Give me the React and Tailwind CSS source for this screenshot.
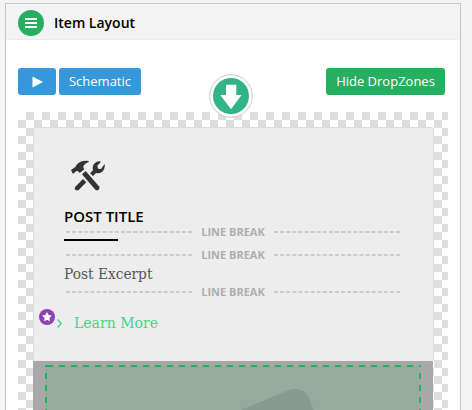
import React from 'react';

function Checker() {
  return (
    <svg className="absolute inset-0 h-full w-full" shapeRendering="crispEdges">
      <defs>
        <pattern id="checker" width="16" height="16" patternUnits="userSpaceOnUse">
          <rect width="16" height="16" fill="#fff" />
          <path d="M8 0h8v8H8zM0 8h8v8H0z" fill="#dedede" />
        </pattern>
      </defs>
      <rect width="100%" height="100%" fill="url(#checker)" />
    </svg>
  );
}

function Dashes() {
  return (
    <svg className="h-[2px] w-[126px] shrink-0">
      <line x1="0" y1="1" x2="126" y2="1" stroke="#cbcbcb" strokeWidth="2" strokeDasharray="4 2.1" />
    </svg>
  );
}

function LineBreak() {
  return (
    <div className="ml-[2px] flex h-[14px] w-[334px] items-center justify-between">
      <Dashes />
      <span className="whitespace-nowrap text-[11px] font-bold leading-[14px] text-[#aeaeae]">LINE BREAK</span>
      <Dashes />
    </div>
  );
}

function Tools() {
  return (
    <svg className="ml-[7px] mt-[32px] h-[31px] w-[34px]" viewBox="0 0 102 93" fill="#333">
      <path d="M0 30L13 21Q20 6 36 3Q46 1 54 3L52 6Q42 10 37 18Q36 23 40 28L26 39Q22 31 15 34L6 42Z" />
      <path d="M33 43L44 33L85 80Q87 85 83 89Q78 93 73 89Z" />
      <path d="M36 57L46 67L23 90Q17 93 13 89Q9 85 13 80Z" />
      <path d="M57 40L66 31Q62 14 76 6Q84 2 90 5L79 17L81 26L90 27L101 12Q103 27 94 35Q85 41 75 39L66 48Z" />
    </svg>
  );
}

export default function App() {
  return (
    <div className="h-[410px] w-[472px] overflow-hidden bg-[#f4f4f4] pl-[5px] pt-[3px] font-['Open_Sans',sans-serif]">
      <div className="h-[420px] w-[456px] border border-[#c6c6c6] bg-white">
        <header className="flex h-[36px] items-center border-b border-[#ececec] bg-[#f3f3f3] pl-[12px] pt-[2px]">
          <div className="flex h-[26px] w-[26px] flex-col items-center justify-center gap-[2px] rounded-full bg-[#27ae60]">
            <i className="h-[2px] w-[12px] bg-white" />
            <i className="h-[2px] w-[12px] bg-white" />
            <i className="h-[2px] w-[12px] bg-white" />
          </div>
          <h1 className="ml-[10px] text-[14px] font-semibold leading-5 text-black">Item Layout</h1>
        </header>

        <div className="flex h-[72px] items-start px-[12px] pt-[28px] text-[13px] leading-[27px] text-white">
          <button className="flex h-[27px] w-[38px] items-center justify-center rounded-[3px] bg-[#3498db]">
            <svg className="h-[12px] w-[11px]" viewBox="0 0 11 12"><path d="M.5 .5L11 6L.5 11.500Z" fill="#fff" /></svg>
          </button>
          <button className="ml-[3px] h-[27px] w-[82px] rounded-[3px] bg-[#3498db]">Schematic</button>
          <button className="ml-auto mr-[3px] h-[27px] w-[119px] whitespace-nowrap rounded-[3px] bg-[#27ae60]">Hide DropZones</button>
        </div>

        <main className="relative ml-[12px] h-[320px] w-[430px] pl-[15px] pt-[15px]">
          <Checker />
          <svg className="absolute left-[191px] top-[-38px] h-[44px] w-[44px]" viewBox="0 0 44 44">
            <circle cx="22" cy="22" r="21.3" fill="#fff" stroke="#c9c9c9" />
            <circle cx="22" cy="22" r="18" fill="#32b487" />
            <path d="M17 10.700h10.300v10.300h5.200L22 35.300L11.300 21h5.700z" fill="#fff" />
          </svg>

          <section className="relative h-[234px] w-[401px] rounded-t-[3px] border border-b-0 border-[#dcdcdc] bg-[#ededed] pl-[30px]">
            <Tools />
            <h2 className="mt-[15px] h-[19px] text-[15px] font-semibold leading-[20px] text-black">POST TITLE</h2>
            <LineBreak />
            <div className="h-[2px] w-[54px] bg-black" />
            <div className="mt-[7px]"><LineBreak /></div>
            <p className="mt-[2px] h-[20px] whitespace-nowrap font-['DejaVu_Serif_Condensed','DejaVu_Serif',serif] text-[15.3px] leading-[20px] text-[#555]">Post Excerpt</p>
            <div className="mt-px"><LineBreak /></div>
            <div className="mt-[14px] flex h-[20px] items-center font-['DejaVu_Serif_Condensed','DejaVu_Serif',serif] text-[15.6px] text-[#43d582]">
              <svg className="ml-[-7px] h-[9px] w-[5px]" viewBox="0 0 5 9"><path d="M.6 .6L4.300 4.500L.6 8.400" fill="none" stroke="currentColor" strokeWidth="1.400" /></svg>
              <span className="ml-[12px] mt-px whitespace-nowrap">Learn More</span>
            </div>
            <svg className="absolute left-[5px] top-[181px] h-[16px] w-[16px]" viewBox="0 0 16 16">
              <circle cx="8" cy="8" r="8" fill="#8e44ad" />
              <path d="M8 3L9.600 5.900L12.800 6.500L10.500 8.900L10.900 12.200L8 10.800L5.100 12.200L5.500 8.900L3.200 6.500L6.400 5.900Z" fill="#fff" />
            </svg>
          </section>

          <section className="relative h-[60px] w-[400px] bg-[#a8a8a8] pl-[12px] pt-[4px]">
            <svg className="block h-[56px] w-[376px]">
              <rect width="376" height="56" fill="#97aa9e" />
              <path d="M174 54L244 25Q258 21 264 33L273 56H170Z" fill="#889b90" />
              <path d="M2 1H376" stroke="#27ae60" strokeWidth="2" strokeDasharray="6 6" />
              <path d="M1 0V56M375 0V56" stroke="#27ae60" strokeWidth="2" strokeDasharray="6 6" strokeDashoffset="-8" />
            </svg>
          </section>
        </main>
      </div>
    </div>
  );
}
